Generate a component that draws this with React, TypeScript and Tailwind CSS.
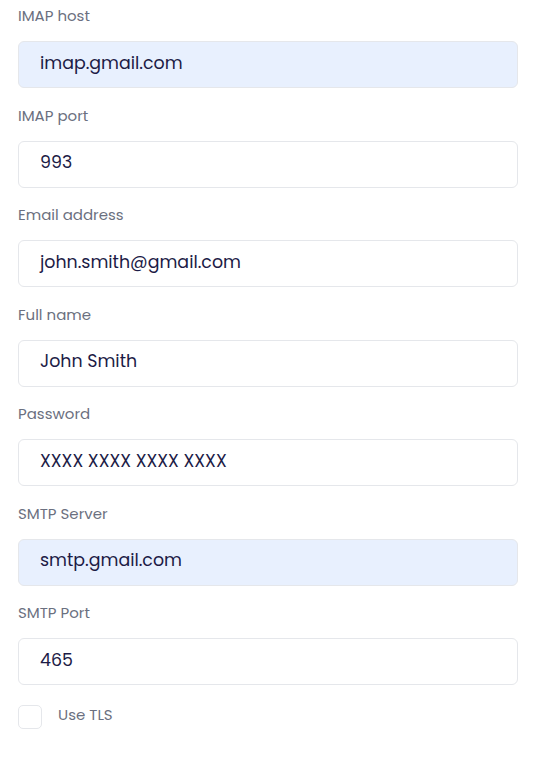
import React from "react";

const fields: { label: string; value: string; filled?: boolean }[] = [
  { label: "IMAP host", value: "imap.gmail.com", filled: true },
  { label: "IMAP port", value: "993" },
  { label: "Email address", value: "john.smith@gmail.com" },
  { label: "Full name", value: "John Smith" },
  { label: "Password", value: "XXXX XXXX XXXX XXXX" },
  { label: "SMTP Server", value: "smtp.gmail.com", filled: true },
  { label: "SMTP Port", value: "465" },
];

export default function App() {
  return (
    <div
      className="w-[555px] h-[762px] bg-white pt-[6px] pl-[18px]"
      style={{ fontFamily: "Poppins, 'Open Sans', sans-serif" }}
    >
      <div className="w-[500px] flex flex-col">
        {fields.map((f) => (
          <div key={f.label} className="flex flex-col h-[99.5px]">
            <label className="text-[15px] leading-[20px] text-[#6b7080] h-[20px]">
              {f.label}
            </label>
            <div
              className={`mt-[15px] h-[47px] rounded-[6px] border border-[#e5e7eb] flex items-center pl-[21px] pb-[3px] text-[17.4px] text-[#1c1b46] ${
                f.filled ? "bg-[#e8f0fe]" : "bg-white"
              }`}
            >
              {f.value}
            </div>
          </div>
        ))}
        <div className="flex items-center mt-[2px]">
          <div className="w-[24px] h-[24px] rounded-[5px] border border-[#e5e7eb] bg-white" />
          <span className="ml-[16px] text-[15px] leading-[20px] pb-[4px] text-[#6b7080]">Use TLS</span>
        </div>
      </div>
    </div>
  );
}
